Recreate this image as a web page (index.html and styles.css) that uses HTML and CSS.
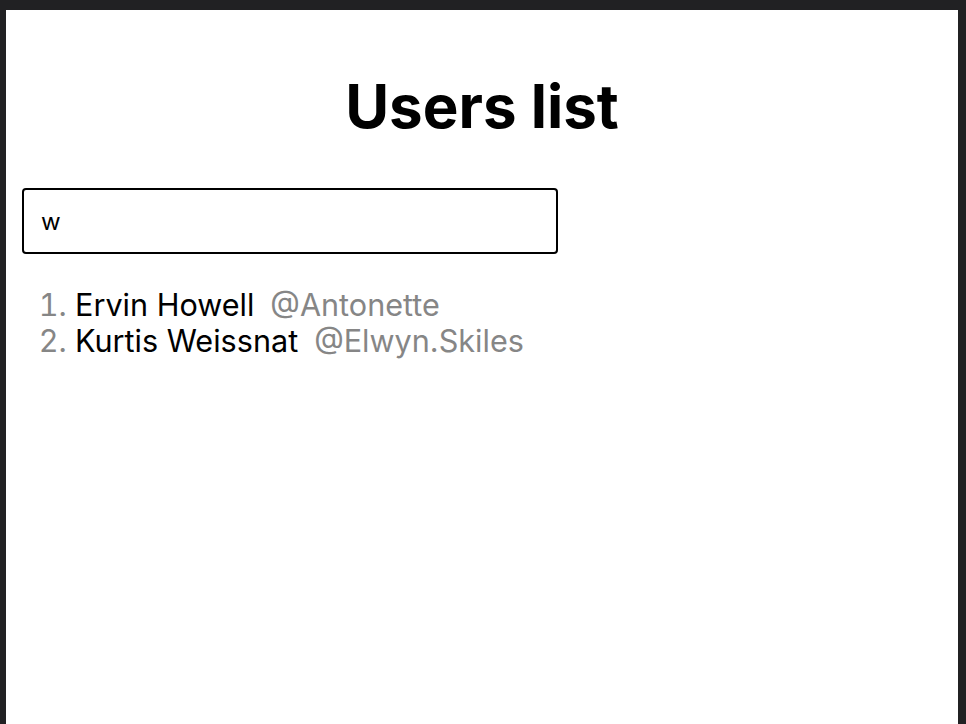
FILE: index.html
```html
<!DOCTYPE html>
<html lang="en">
<head>
<meta charset="utf-8">
<title>Users list</title>
<link rel="stylesheet" href="styles.css">
</head>
<body>
<main class="app">
  <h1 class="title">Users list</h1>
  <input class="search" type="text" value="w" aria-label="Search users">
  <ol class="users">
    <li class="user"><span class="name">Ervin Howell</span><span class="handle">@Antonette</span></li>
    <li class="user"><span class="name">Kurtis Weissnat</span><span class="handle">@Elwyn.Skiles</span></li>
  </ol>
</main>
</body>
</html>
```
FILE: styles.css
```css
html, body {
  margin: 0;
  height: 100%;
}
body {
  background: #212123;
  padding: 10px 8px 0 6px;
  box-sizing: border-box;
  font-family: Inter, "Noto Sans", sans-serif;
}
.app {
  background: #fff;
  min-height: 100%;
  padding: 0 16px;
  box-sizing: border-box;
  display: flow-root;
}
.title {
  margin: 60px 0 0;
  text-align: center;
  font-size: 60px;
  font-weight: 700;
  line-height: 72px;
  color: #000;
}
.search {
  display: block;
  margin-top: 46px;
  width: 536px;
  height: 66px;
  box-sizing: border-box;
  border: 2px solid #000;
  border-radius: 4px;
  padding: 0 17px;
  font-family: Inter, sans-serif;
  font-size: 24px;
  color: #000;
  outline: none;
}
.users {
  margin: 33px 0 0;
  padding-left: 53px;
  font-size: 30.6px;
  line-height: 36px;
  color: #868686;
}
.name {
  color: #000;
}
.handle {
  margin-left: 16px;
}
```
